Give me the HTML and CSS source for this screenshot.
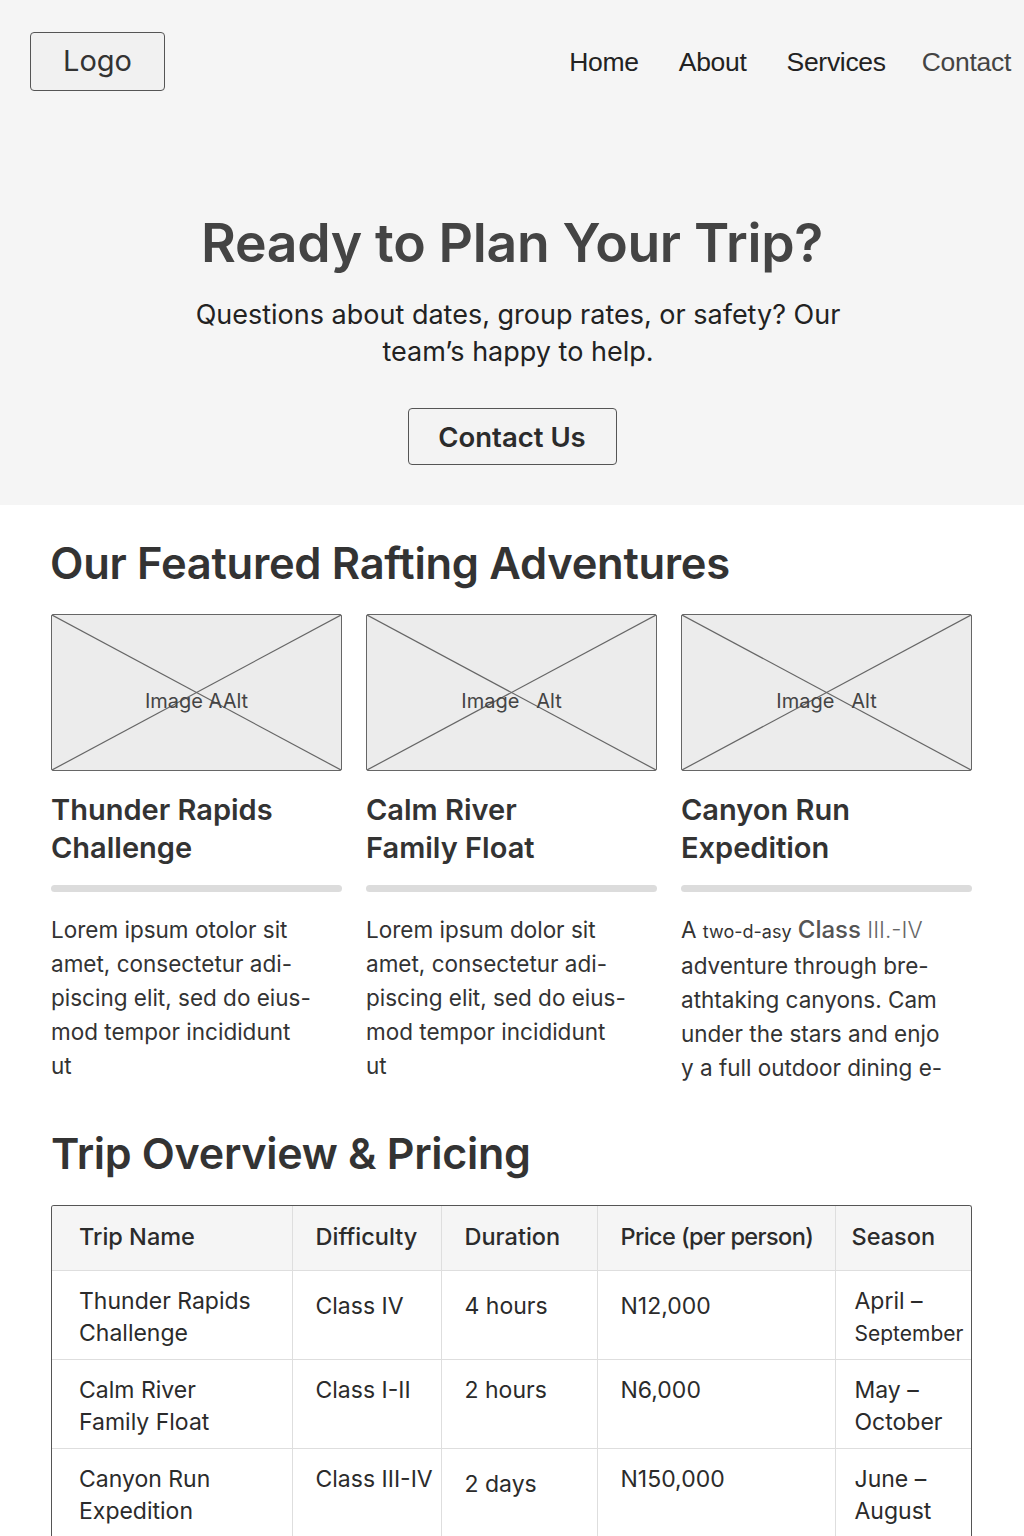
FILE: index.html
```html
<!DOCTYPE html>
<html lang="en">
<head>
<meta charset="utf-8">
<title>Rafting Adventures</title>
<link rel="stylesheet" href="styles.css">
</head>
<body>
<div class="top">
  <header class="header">
    <div class="logo">Logo</div>
    <nav class="nav">
      <a href="#">Home</a>
      <a href="#">About</a>
      <a href="#">Services</a>
      <a href="#" class="muted">Contact</a>
    </nav>
  </header>
  <section class="hero">
    <h1 class="hero-title">Ready to Plan Your Trip?</h1>
    <p class="hero-sub">Questions about dates, group rates, or safety? Our team’s happy to help.</p>
    <button class="btn">Contact Us</button>
  </section>
</div>

<section class="featured">
  <h2 class="section-title">Our Featured Rafting Adventures</h2>
  <div class="cards">
    <article class="card">
      <div class="ph">
        <svg class="ph-x" viewBox="0 0 100 100" preserveAspectRatio="none"><line x1="0" y1="0" x2="100" y2="100"/><line x1="100" y1="0" x2="0" y2="100"/></svg>
        <span class="ph-label">Image AAlt</span>
      </div>
      <h3 class="card-title">Thunder Rapids<br>Challenge</h3>
      <div class="bar"></div>
      <p class="card-text">Lorem ipsum otolor sit<br>amet, consectetur adi-<br>piscing elit, sed do eius-<br>mod tempor incididunt<br>ut</p>
    </article>
    <article class="card">
      <div class="ph">
        <svg class="ph-x" viewBox="0 0 100 100" preserveAspectRatio="none"><line x1="0" y1="0" x2="100" y2="100"/><line x1="100" y1="0" x2="0" y2="100"/></svg>
        <span class="ph-label">Image &nbsp; Alt</span>
      </div>
      <h3 class="card-title">Calm River<br>Family Float</h3>
      <div class="bar"></div>
      <p class="card-text">Lorem ipsum dolor sit<br>amet, consectetur adi-<br>piscing elit, sed do eius-<br>mod tempor incididunt<br>ut</p>
    </article>
    <article class="card">
      <div class="ph">
        <svg class="ph-x" viewBox="0 0 100 100" preserveAspectRatio="none"><line x1="0" y1="0" x2="100" y2="100"/><line x1="100" y1="0" x2="0" y2="100"/></svg>
        <span class="ph-label">Image &nbsp; Alt</span>
      </div>
      <h3 class="card-title">Canyon Run<br>Expedition</h3>
      <div class="bar"></div>
      <p class="card-text">A <span class="small">two-d-asy</span> <span class="grey">Class</span> <span class="grey-thin">III.-IV</span><br>adventure through bre-<br>athtaking canyons. Cam<br>under the stars and enjo<br>y a full outdoor dining e-</p>
    </article>
  </div>
</section>

<section class="overview">
  <h2 class="section-title">Trip Overview &amp; Pricing</h2>
  <div class="table-wrap">
    <table class="table">
      <colgroup>
        <col class="c1"><col class="c2"><col class="c3"><col class="c4"><col class="c5">
      </colgroup>
      <thead>
        <tr><th class="first">Trip Name</th><th>Difficulty</th><th>Duration</th><th class="price">Price (per person)</th><th class="season">Season</th></tr>
      </thead>
      <tbody>
        <tr>
          <td class="first name">Thunder Rapids<br>Challenge</td>
          <td class="low">Class IV</td>
          <td class="low">4 hours</td>
          <td class="low">N12,000</td>
          <td class="season">April –<br><span class="sm">September</span></td>
        </tr>
        <tr>
          <td class="first name">Calm River<br>Family Float</td>
          <td>Class I-II</td>
          <td>2 hours</td>
          <td>N6,000</td>
          <td class="season">May –<br>October</td>
        </tr>
        <tr>
          <td class="first name">Canyon Run<br>Expedition</td>
          <td>Class III-IV</td>
          <td class="low">2 days</td>
          <td>N150,000</td>
          <td class="season">June –<br>August</td>
        </tr>
      </tbody>
    </table>
  </div>
</section>
</body>
</html>
```

FILE: styles.css
```css
* { box-sizing: border-box; }
html, body { margin: 0; padding: 0; }
body {
  font-family: Inter, "Noto Sans", "Liberation Sans", sans-serif;
  color: #2b2b2b;
  background: #ffffff;
}

.top {
  background: #f5f5f5;
  padding: 32px 0 40px;
  height: 505px;
}
.header {
  display: flex;
  align-items: center;
  justify-content: space-between;
  padding: 0 13px 0 30px;
}
.logo {
  width: 135px;
  height: 59px;
  border: 1px solid #555;
  border-radius: 4px;
  background: #f1f1f1;
  display: flex;
  align-items: center;
  justify-content: center;
  font-size: 29px;
  color: #333;
  padding-bottom: 2px;
}
.nav {
  display: flex;
  gap: 40px;
  padding-top: 2px;
}
.nav a {
  font-family: "Liberation Sans", Arial, sans-serif;
  font-size: 26.5px;
  color: #222;
  text-decoration: none;
  letter-spacing: -0.3px;
}
.nav a.muted { color: #444; margin-left: -4px; }

.hero {
  text-align: center;
  padding-top: 120px;
}
.hero-title {
  margin: 0;
  font-size: 53.5px;
  font-weight: 600;
  color: #444;
  letter-spacing: -0.3px;
  line-height: 64px;
}
.hero-sub {
  margin: 21px auto 0;
  max-width: 680px;
  font-size: 27px;
  line-height: 37px;
  color: #222;
  position: relative;
  left: 6px;
}
.btn {
  margin-top: 38px;
  width: 209px;
  height: 57px;
  border: 1px solid #555;
  border-radius: 4px;
  background: #f3f3f3;
  font-family: inherit;
  font-size: 27.5px;
  font-weight: 600;
  color: #2b2b2b;
  padding: 0;
}

.featured { padding: 0 52px 0 51px; }
.section-title {
  margin: 0;
  font-size: 43.5px;
  font-weight: 600;
  color: #333;
  letter-spacing: -0.3px;
  line-height: 52px;
}
.featured .section-title { padding-top: 32px; margin-left: -1px; }
.cards {
  display: grid;
  grid-template-columns: repeat(3, 1fr);
  gap: 24px;
  margin-top: 25px;
}
.ph {
  position: relative;
  height: 157px;
  background: #ececec;
  border: 1.5px solid #666;
  border-radius: 2px;
  display: flex;
  align-items: center;
  justify-content: center;
}
.ph-x {
  position: absolute;
  inset: 0;
  width: 100%;
  height: 100%;
}
.ph-x line {
  stroke: #666;
  stroke-width: 1.2;
  vector-effect: non-scaling-stroke;
}
.ph-label {
  position: relative;
  font-size: 20px;
  color: #444;
  margin-top: 16px;
}
.card-title {
  margin: 20px 0 0;
  font-size: 29px;
  font-weight: 600;
  line-height: 38px;
  color: #333;
}
.bar {
  margin-top: 18px;
  height: 7px;
  border-radius: 4px;
  background: #dcdcdc;
}
.card-text {
  margin: 21px 0 0;
  font-size: 22.5px;
  line-height: 34px;
  color: #333;
}
.small { font-size: 18px; }
.grey { color: #555; font-size: 24px; font-weight: 500; }
.grey-thin { color: #666; font-weight: 300; }

.overview { padding: 0 52px 0 51px; }
.overview .section-title { padding-top: 42px; font-size: 43px; }
.table-wrap {
  margin-top: 26px;
  border: 1px solid #555;
  border-bottom: none;
  border-radius: 3px 3px 0 0;
  overflow: hidden;
}
.table {
  width: 100%;
  border-collapse: collapse;
  table-layout: fixed;
}
.c1 { width: 240px; }
.c2 { width: 149px; }
.c3 { width: 156px; }
.c4 { width: 238px; }
.c5 { width: auto; }
.table th, .table td {
  border: 1px solid #dedede;
  text-align: left;
  vertical-align: top;
  padding: 0 0 0 23px;
  color: #2b2b2b;
  white-space: nowrap;
}
.table tr > :first-child { border-left: none; }
.table tr > :last-child { border-right: none; }
.table thead tr > * { border-top: none; }
.table th {
  background: #f5f5f5;
  height: 64px;
  vertical-align: middle;
  font-size: 23.5px;
  font-weight: 500;
  padding-bottom: 2px;
}
.table th.price { letter-spacing: -0.6px; }
.table td {
  height: 89px;
  font-size: 23px;
  line-height: 32px;
  padding-top: 14px;
}
.table td.low { padding-top: 19px; }
.table .first { padding-left: 27px; }
.table .season { padding-left: 16px; }
.table td.season { padding-left: 19px; }
.sm { font-size: 21px; }
```
